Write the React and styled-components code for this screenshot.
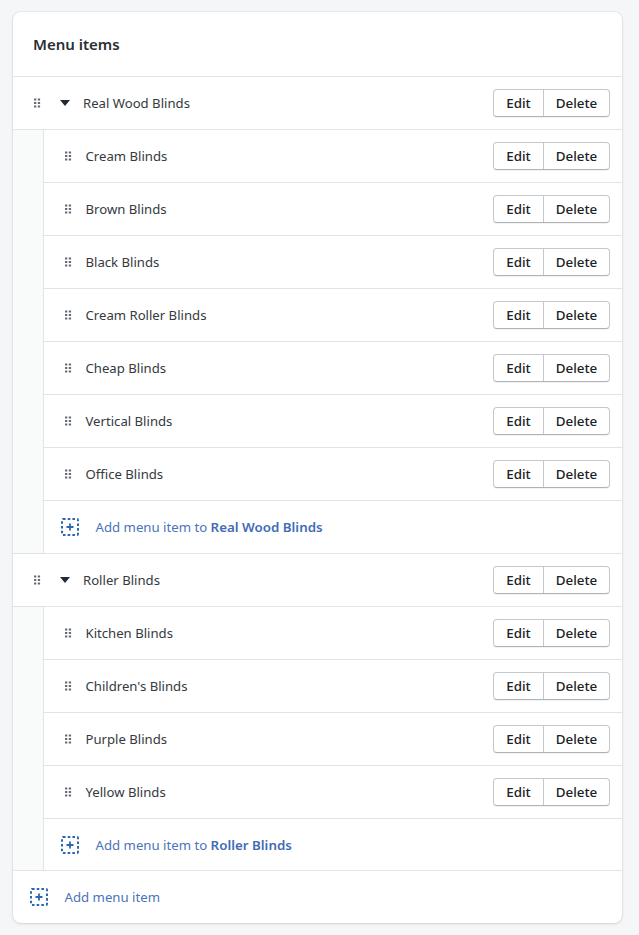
import React from 'react';
import styled, { createGlobalStyle } from 'styled-components';

const GlobalStyle = createGlobalStyle`
    html, body {
        margin: 0;
        padding: 0;
        background: #f4f6f8;
    }
    body {
        font-family: "Noto Sans", "Open Sans", sans-serif;
        font-size: 14px;
        color: #212b36;
    }
`;

const Page = styled.div`
    padding: 12px 17px 12px 13px;
`;

const Card = styled.div`
    background: #fff;
    border-radius: 8px;
    box-shadow: 0 0 0 1px rgba(63,63,68,0.05), 0 1px 3px 0 rgba(63,63,68,0.15);
    overflow: hidden;
`;

const Header = styled.div`
    height: 65px;
    box-sizing: border-box;
    padding: 0 20px;
    display: flex;
    align-items: center;
    font-size: 15px;
    font-weight: 600;
    color: #2a2f35;
    border-bottom: 1px solid #e1e3e5;
`;

const Row = styled.div`
    height: 53px;
    box-sizing: border-box;
    display: flex;
    align-items: center;
    padding: 0 12px 0 20px;
    border-bottom: 1px solid #e1e3e5;
`;

const Handle = styled.svg`
    width: 8px;
    height: 12px;
    flex: none;
    fill: #636c76;
`;

const Caret = styled.svg`
    width: 10px;
    height: 6px;
    flex: none;
    margin-left: 19px;
    margin-right: 13px;
    fill: #212b36;
`;

const Label = styled.div`
    flex: 1;
    font-size: 13.15px;
    margin-left: ${({ $child }) => ($child ? '13.5px' : '0')};
    color: #343a40;
`;

const ButtonGroup = styled.div`
    display: flex;
    height: 28px;
    box-sizing: border-box;
    border: 1px solid #c4c8cc;
    border-bottom-color: #aeb3b8;
    border-radius: 4px;
    box-shadow: 0 1px 0 rgba(22,29,37,0.05);
    background: #fff;
`;

const Button = styled.button`
    border: 0;
    background: none;
    padding: 0;
    width: ${({ $width }) => $width}px;
    font-family: inherit;
    font-size: 13.4px;
    font-weight: 500;
    color: #202223;
    & + & {
        border-left: 1px solid #c4c8cc;
    }
`;

const Nested = styled.div`
    display: flex;
    flex-direction: column;
    background: #f9fafa;
    padding-left: 30px;
    border-bottom: 1px solid #e1e3e5;
`;

const NestedList = styled.div`
    background: #fff;
    border-left: 1px solid #e1e3e5;
    & > ${Row}:last-child {
        border-bottom: 0;
    }
`;

const AddRow = styled.div`
    height: ${({ $height }) => $height}px;
    box-sizing: border-box;
    display: flex;
    align-items: center;
    padding-left: 17px;
    gap: 16.5px;
    color: #4a74b8;
    font-size: 13.2px;
`;

const AddIcon = styled.svg`
    width: 18px;
    height: 18px;
    flex: none;
`;

const Strong = styled.strong`
    font-weight: 600;
    font-size: 13.35px;
    color: #3f6cb5;
`;

const menu = [
    {
        name: 'Real Wood Blinds',
        children: ['Cream Blinds', 'Brown Blinds', 'Black Blinds', 'Cream Roller Blinds', 'Cheap Blinds', 'Vertical Blinds', 'Office Blinds'],
        addHeight: 52,
    },
    {
        name: 'Roller Blinds',
        children: ['Kitchen Blinds', "Children's Blinds", 'Purple Blinds', 'Yellow Blinds'],
        addHeight: 51,
    },
];

const DragHandle = () => (
    <Handle viewBox="0 0 8 12">
        {[1.5, 5, 8.5].map((y) => (
            <g key={y}>
                <rect x="1" y={y} width="2.3" height="2" />
                <rect x="4.8" y={y} width="2.3" height="2" />
            </g>
        ))}
    </Handle>
);

const Actions = () => (
    <ButtonGroup>
        <Button $width={49}>Edit</Button>
        <Button $width={66}>Delete</Button>
    </ButtonGroup>
);

const PlusBox = () => (
    <AddIcon viewBox="0 0 18 18">
        <rect x="1" y="1" width="16" height="16" rx="1" fill="none" stroke="#2c68ae" strokeWidth="2" strokeDasharray="2.6 2.1" />
        <path d="M9 5.5v7M5.5 9h7" stroke="#2c68ae" strokeWidth="1.8" fill="none" />
    </AddIcon>
);

const App = () => {
    return (
        <Page>
            <GlobalStyle />
            <Card>
                <Header>Menu items</Header>
                {menu.map((item) => (
                    <div key={item.name}>
                        <Row>
                            <DragHandle />
                            <Caret viewBox="0 0 10 6"><path d="M0 0h10L5 6z" /></Caret>
                            <Label>{item.name}</Label>
                            <Actions />
                        </Row>
                        <Nested>
                            <NestedList>
                                {item.children.map((child) => (
                                    <Row key={child} $child>
                                        <DragHandle />
                                        <Label $child>{child}</Label>
                                        <Actions />
                                    </Row>
                                ))}
                                <AddRow $height={item.addHeight}>
                                    <PlusBox />
                                    <span>Add menu item to <Strong>{item.name}</Strong></span>
                                </AddRow>
                            </NestedList>
                        </Nested>
                    </div>
                ))}
                <AddRow $height={52}>
                    <PlusBox />
                    <span>Add menu item</span>
                </AddRow>
            </Card>
        </Page>
    );
};

export default App;
